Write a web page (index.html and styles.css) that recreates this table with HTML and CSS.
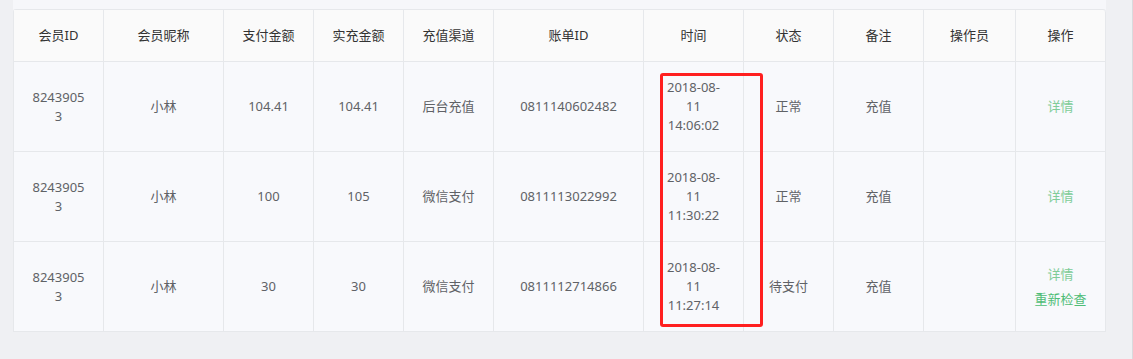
FILE: index.html
```html
<!DOCTYPE html>
<html lang="zh-CN">
<head>
<meta charset="utf-8">
<link rel="stylesheet" href="styles.css">
</head>
<body>
<div class="page">
  <div class="panel">
    <table class="grid">
      <colgroup>
        <col class="c90"><col class="c120"><col class="c90"><col class="c90"><col class="c90"><col class="c150"><col class="c100"><col class="c90"><col class="c90"><col class="c92"><col class="c90">
      </colgroup>
      <thead>
        <tr>
          <th>会员ID</th><th>会员昵称</th><th>支付金额</th><th>实充金额</th><th>充值渠道</th><th>账单ID</th><th>时间</th><th>状态</th><th>备注</th><th>操作员</th><th>操作</th>
        </tr>
      </thead>
      <tbody>
        <tr>
          <td class="id">82439053</td><td>小林</td><td>104.41</td><td>104.41</td><td>后台充值</td><td>0811140602482</td><td>2018-08-11 14:06:02</td><td>正常</td><td>充值</td><td></td><td><span class="link">详情</span></td>
        </tr>
        <tr>
          <td class="id">82439053</td><td>小林</td><td>100</td><td>105</td><td>微信支付</td><td>0811113022992</td><td>2018-08-11 11:30:22</td><td>正常</td><td>充值</td><td></td><td><span class="link">详情</span></td>
        </tr>
        <tr>
          <td class="id">82439053</td><td>小林</td><td>30</td><td>30</td><td>微信支付</td><td>0811112714866</td><td>2018-08-11 11:27:14</td><td>待支付</td><td>充值</td><td></td><td><div class="actions"><span class="link">详情</span><span class="link strong">重新检查</span></div></td>
        </tr>
      </tbody>
    </table>
    <div class="mark"></div>
  </div>
</div>
</body>
</html>
```

FILE: styles.css
```css
html, body {
  margin: 0;
  padding: 0;
}
body {
  background: #eff0f3;
  font-family: "Noto Sans", "Noto Sans CJK SC", sans-serif;
  font-size: 13px;
  width: 1133px;
  height: 359px;
  overflow: hidden;
}
.page {
  padding-left: 13px;
  width: 1119px;
  height: 359px;
  border-right: 1px solid #d9dadd;
}
.panel {
  position: relative;
  width: 1093px;
  padding-top: 9px;
  background: #f6f7fa;
}
.grid {
  width: 1093px;
  table-layout: fixed;
  border-collapse: separate;
  border-spacing: 0;
  border-top: 1px solid #e6e8eb;
  border-left: 1px solid #e6e8eb;
  border-radius: 3px 3px 0 0;
  background: #f8f9fc;
}
.c90 { width: 90px; }
.c92 { width: 92px; }
.c100 { width: 100px; }
.c120 { width: 120px; }
.c150 { width: 150px; }
.grid th,
.grid td {
  border-right: 1px solid #e6e8eb;
  border-bottom: 1px solid #e6e8eb;
  text-align: center;
  padding: 0 16px;
  line-height: 19px;
}
.grid th {
  height: 51px;
  background: #fafafa;
  color: #333;
  font-weight: normal;
}
.grid th:last-child { border-top-right-radius: 3px; }
.grid td {
  height: 89px;
  color: #606266;
}
.grid td.id {
  word-break: break-all;
}
.link {
  color: #80cc98;
}
.link.strong {
  color: #4fbd76;
}
.actions {
  display: flex;
  flex-direction: column;
  align-items: center;
  gap: 6px;
}
.mark {
  position: absolute;
  left: 647px;
  top: 73px;
  width: 97px;
  height: 248px;
  border: 3px solid #ff1f1f;
  border-radius: 3px;
}
```
